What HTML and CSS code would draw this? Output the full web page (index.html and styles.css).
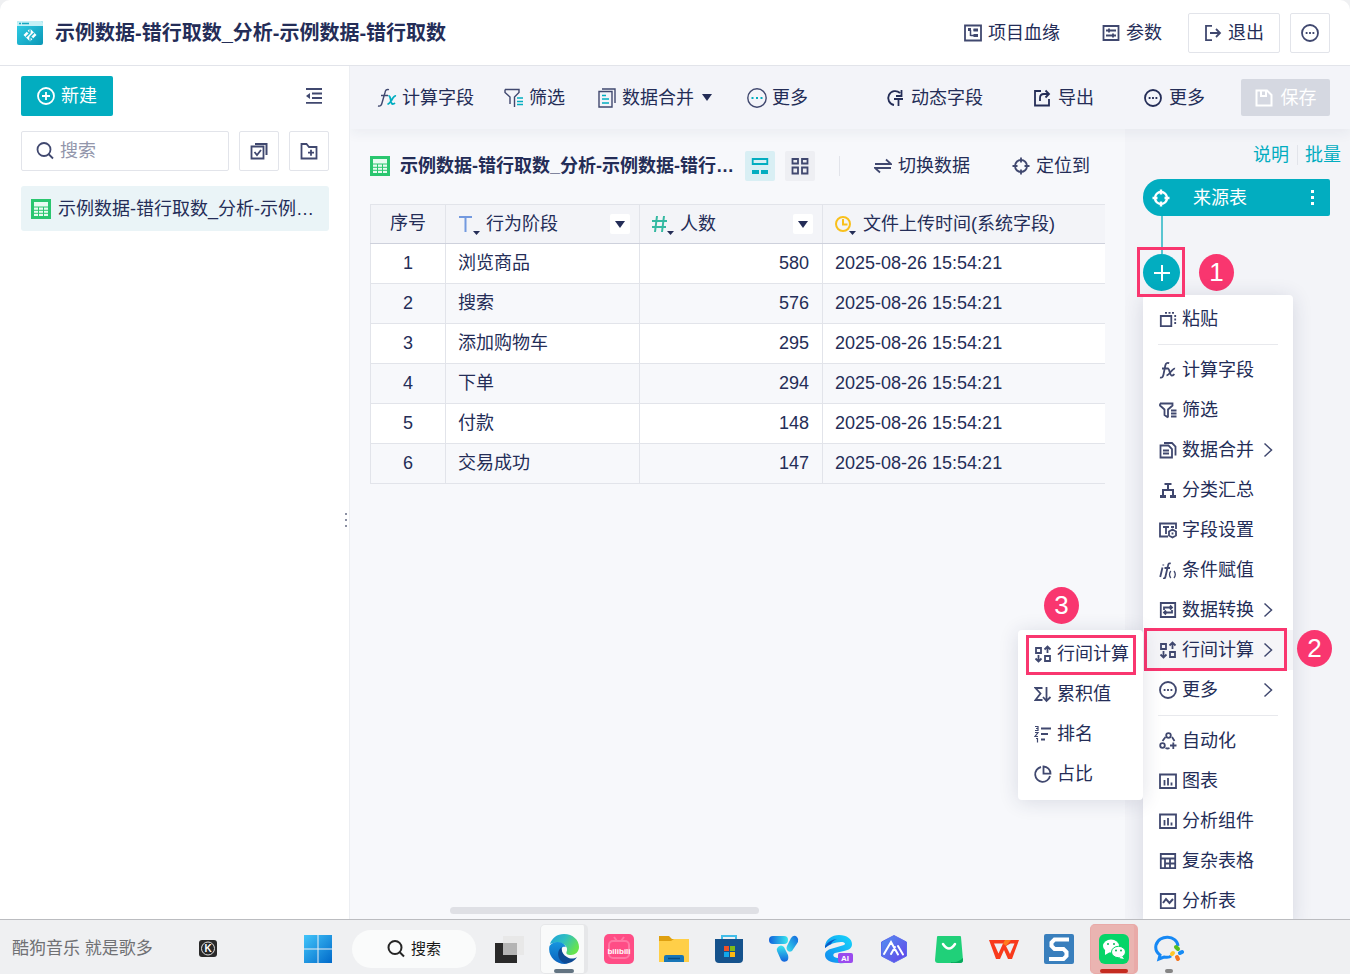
FILE: index.html
```
<!DOCTYPE html>
<html lang="zh-CN">
<head>
    <meta charset="UTF-8">
    <meta name="viewport" content="width=device-width, initial-scale=1.0">
    <title>示例数据-错行取数_分析</title>
    <link rel="stylesheet" href="styles.css">
</head>
<body>
    <!-- Shared icons -->
    <svg class="sprite" aria-hidden="true">
        <symbol id="i-more" viewBox="0 0 18 18"><circle cx="9" cy="9" r="8"/><path d="M4.7 9h1.8M8.1 9h1.8M11.5 9h1.8" stroke-width="1.8"/></symbol>
        <symbol id="i-sheet" viewBox="0 0 20 20"><path d="M0 0h20v20H0z" fill="#2ac66f" stroke="none"/><path d="M3 3h14v14H3z" fill="#e9fbf1" stroke="none"/><path d="M3 8h14M3 11.300h14M3 14.300h14M7.500 8v9M12.500 8v9" stroke="#2ac66f" stroke-width="1"/></symbol>
        <symbol id="i-target" viewBox="0 0 18 18"><circle cx="9" cy="9" r="6"/><path d="M9 .5v5M9 12.500v5M.5 9h5M12.500 9h5"/></symbol>
        <symbol id="i-fx" viewBox="0 0 18 18"><path d="M1 16.500c2.200.6 3-.6 3.500-3L6.300 4.500C6.800 2.200 8 1.500 10.200 2.200M3 7.500h6.500M8.500 7.500c2-.6 2.300 7 4 7s2-.6 2.800-1.500M16 7.600c-2.500-1-5.500 6.800-8.500 6.800"/></symbol>
        <symbol id="i-filter" viewBox="0 0 18 18"><path d="M1 2.500h12.500v2L9 8.500v8M1 2.500v2L5.500 8.500V14L9 16.500M12 9.500h5.500M12 12.500h5.500M12 15.500h5.500"/></symbol>
        <symbol id="i-merge" viewBox="0 0 18 18"><path d="M1.500 4.500h8L13 8v8.500H1.500zM4 9.500h6M4 12.500h6M5 2h8l3.500 3.500v9"/></symbol>
        <symbol id="i-caret" viewBox="0 0 10 7"><path d="M0 0h10L5 7z" fill="currentColor" stroke="none"/></symbol>
        <symbol id="i-arrow" viewBox="0 0 10 16"><path d="M1.500 1.500 8.500 8l-7 6.500"/></symbol>
        <symbol id="i-row" viewBox="0 0 18 18"><path d="M2 3h5v5H2zM11 11h5v5h-5zM13.500 8V1.500M10.500 4.500l3-3 3 3M4.500 10v6.500M1.500 13.500l3 3 3-3"/></symbol>
        <symbol id="i-chart" viewBox="0 0 18 18"><path d="M1 2.500h16v13.500H1zM5.500 8v5.500M9 6v7.500M12.500 10.500v3"/></symbol>
        <symbol id="i-search" viewBox="0 0 18 18"><circle cx="8" cy="7.500" r="6.500"/><path d="m12.500 12 4.500 4.500"/></symbol>
    </svg>

    <div class="app">
        <header class="header">
            <svg class="logo" viewBox="0 0 28 26">
                <defs><linearGradient id="logo-bg" x1="0" y1="0" x2="1" y2="1"><stop offset="0" stop-color="#31d0e8"/><stop offset="1" stop-color="#0a96b5"/></linearGradient></defs>
                <rect x="1" y="1" width="26" height="24" rx="2" fill="url(#logo-bg)"/>
                <path d="M1 6V3q0-2 2-2h22q2 0 2 2v3z" fill="#c5f1f7"/><path d="M3 3.500h2M6 3.500h7" stroke="#16a7c0" stroke-width="1.500"/>
                <path d="M14 8.500 20.500 15 14 21.500 7.500 15z" fill="#fff"/><path d="M14 8v5l-4 4M14 22v-5l4-4M11 11l3 3M17 19l-3-3" fill="none" stroke="#1eb3cc" stroke-width="1.300"/>
            </svg>
            <h1>示例数据-错行取数_分析-示例数据-错行取数</h1>
            <nav class="header-actions">
                <button class="tool"><svg class="icon" viewBox="0 0 18 18"><path d="M1 1.500h16v15H1z"/><path d="M4 6h3M9.500 6H14M6.500 6v6M6.500 11.500H14" stroke-width="1.500"/><path d="M4 4h3v3H4zM9.500 4.500H14v3H9.500zM9.500 10H14v3H9.500z" fill="currentColor" stroke="none"/></svg>项目血缘</button>
                <button class="tool"><svg class="icon" viewBox="0 0 18 18"><path d="M1.500 2h15v14h-15zM4 6.500h10M4 11.500h10M7 4.500v4M11 9.500v4"/></svg>参数</button>
                <div class="header-buttons">
                    <button class="outline exit"><svg class="icon" viewBox="0 0 18 18"><path d="M8 1.800H2v14.400h6M6 9h10M12 5l4 4-4 4"/></svg>退出</button>
                    <button class="outline square" aria-label="更多"><svg class="icon"><use href="#i-more"/></svg></button>
                </div>
            </nav>
        </header>

        <div class="body">
            <aside class="sidebar">
                <div class="sidebar-top">
                    <button class="primary"><svg class="icon" viewBox="0 0 18 18"><circle cx="9" cy="9" r="8"/><path d="M9 5v8M5 9h8"/></svg>新建</button>
                    <button class="plain" aria-label="收起"><svg class="icon" viewBox="0 0 18 18"><path d="M1 2h16M7 6.500h10M7 11h10M1 15.800h16"/><path d="M1 9l4-3v6z" fill="currentColor" stroke="none"/></svg></button>
                </div>
                <div class="sidebar-search">
                    <label class="search-box"><svg class="icon"><use href="#i-search"/></svg><input type="text" placeholder="搜索" aria-label="搜索"></label>
                    <button class="outline square" aria-label="批量选择"><svg class="icon" viewBox="0 0 18 18"><path d="M1.500 4.500h12v12h-12zM4.500 10l2.500 3 4-5"/><path d="M5 2h11.500v11" stroke-width="2"/></svg></button>
                    <button class="outline square" aria-label="新建文件夹"><svg class="icon" viewBox="0 0 18 18"><path d="M1.500 2h5l2.500 3h7.500v11.500h-15zM8 10.700h6M11 7.700v6"/></svg></button>
                </div>
                <a class="table-item" href="#"><svg class="sheet"><use href="#i-sheet"/></svg><span>示例数据-错行取数_分析-示例…</span></a>
                <div class="resize-handle"><i></i><i></i><i></i></div>
            </aside>

            <main class="workspace">
                <div class="toolbar">
                    <div class="toolbar-left">
                        <button class="tool"><svg class="icon large" viewBox="0 0 20 20"><path d="M1 18c2.500.6 3.500-.8 4-3L8 4.500C8.500 2 9.500 1 12 1.700M4 7.500h7"/><path class="accent" d="M11.500 8c2.500-.6 2 8 4 8s2-.5 2.500-1M19 8c-3-1-5 8-8.500 8" stroke-width="1.800"/></svg>计算字段</button>
                        <button class="tool"><svg class="icon large" viewBox="0 0 20 20"><path d="M1 1.500h14v3L10.500 9v10M1 1.500v3L6 9v7"/><path class="accent" d="M13 10h6M13 13.500h6M13 16.500h6"/></svg>筛选</button>
                        <button class="tool has-caret"><svg class="icon large" viewBox="0 0 20 20"><path d="M2 3.500h13v15.500H2zM5 1h13v14"/><path class="accent" d="M5 7.500h4M5 11h7M5 15h7"/></svg>数据合并<svg class="caret"><use href="#i-caret"/></svg></button>
                        <button class="tool"><svg class="icon large" viewBox="0 0 20 20"><circle cx="10" cy="10" r="9.200"/><path class="accent" d="M4.500 10h2M9 10h2M13.500 10h2" stroke-width="2"/></svg>更多</button>
                    </div>
                    <div class="toolbar-right">
                        <button class="tool"><svg class="icon" viewBox="0 0 18 18"><path d="M14 4A7 7 0 1 0 8 16M15.500 1v6H10M8 10h9M12.500 10v7"/></svg>动态字段</button>
                        <button class="tool"><svg class="icon" viewBox="0 0 18 18"><path d="M8 2H2v14.500h14V10M7 12V9q0-4 4-4h5M12.500 1.500 16 5l-3.500 3.500"/></svg>导出</button>
                        <button class="tool"><svg class="icon"><use href="#i-more"/></svg>更多</button>
                        <button class="save" disabled><svg class="icon" viewBox="0 0 18 18"><path d="M1.500 1.500H12l4.500 4.500v10.500h-15zM6 2v5h5V2" stroke-width="2"/></svg>保存</button>
                    </div>
                </div>

                <div class="panels">
                    <section class="data-panel">
                        <div class="data-head">
                            <svg class="sheet"><use href="#i-sheet"/></svg>
                            <h2>示例数据-错行取数_分析-示例数据-错行…</h2>
                            <button class="view active" aria-label="表格视图"><svg class="icon" viewBox="0 0 18 18"><path d="M1.700 2h14.600v5H1.700z"/><path d="M1 13h7v4H1zM10 13h7v4h-7z" fill="currentColor" stroke="none"/></svg></button>
                            <button class="view" aria-label="网格视图"><svg class="icon" viewBox="0 0 18 18"><path d="M1.500 2h5.500v4.500H1.500zM11 2h5.500v4.500H11zM1.500 10.500h5.500v6H1.500zM11 10.500h5.500v6H11z"/></svg></button>
                            <div class="data-actions">
                                <button class="tool"><svg class="icon" viewBox="0 0 18 18"><path d="M1 7h16l-5-4.500M17 11H1l5 4.500"/></svg>切换数据</button>
                                <button class="tool"><svg class="icon"><use href="#i-target"/></svg>定位到</button>
                            </div>
                        </div>

                        <table class="data-table">
                            <colgroup><col class="c-index"><col class="c-stage"><col class="c-count"><col></colgroup>
                            <thead>
                                <tr>
                                    <th>序号</th>
                                    <th><div class="th"><svg class="type text" viewBox="0 0 24 22"><path d="M1 4h13M7.500 4v15" stroke-width="2"/><path class="mark" d="M15 18h7l-3.500 4z"/></svg>行为阶段<button aria-label="行为阶段菜单"><svg class="caret"><use href="#i-caret"/></svg></button></div></th>
                                    <th><div class="th"><svg class="type number" viewBox="0 0 24 22"><path d="M0 8h15M0 14h14M5 3 3 19M12 3l-2 16" stroke-width="2"/><path class="mark" d="M15 18h7l-3.500 4z"/></svg>人数<button aria-label="人数菜单"><svg class="caret"><use href="#i-caret"/></svg></button></div></th>
                                    <th><div class="th"><svg class="type time" viewBox="0 0 24 22"><circle cx="8" cy="11" r="7" stroke-width="2"/><path d="M8 6v5.500h4.500" stroke-width="2"/><path class="mark" d="M14 18h7l-3.500 4z"/></svg>文件上传时间(系统字段)</div></th>
                                </tr>
                            </thead>
                            <tbody>
                                <tr><td>1</td><td>浏览商品</td><td>580</td><td>2025-08-26 15:54:21</td></tr>
                                <tr><td>2</td><td>搜索</td><td>576</td><td>2025-08-26 15:54:21</td></tr>
                                <tr><td>3</td><td>添加购物车</td><td>295</td><td>2025-08-26 15:54:21</td></tr>
                                <tr><td>4</td><td>下单</td><td>294</td><td>2025-08-26 15:54:21</td></tr>
                                <tr><td>5</td><td>付款</td><td>148</td><td>2025-08-26 15:54:21</td></tr>
                                <tr><td>6</td><td>交易成功</td><td>147</td><td>2025-08-26 15:54:21</td></tr>
                            </tbody>
                        </table>
                        <div class="scrollbar"></div>
                    </section>

                    <aside class="steps-panel">
                        <div class="step-links"><a href="#">说明</a><a href="#">批量</a></div>
                        <div class="source-node"><svg class="icon"><use href="#i-target"/></svg><span>来源表</span><button aria-label="来源表菜单"><i></i><i></i><i></i></button></div>
                        <div class="connector"></div>
                        <div class="add-step">
                            <button class="add-button" aria-label="添加步骤"><svg viewBox="0 0 18 18"><path d="M9 1v16M1 9h16"/></svg></button>
                            <div class="highlight mark-add"></div>
                            <span class="badge badge-1">1</span>

                            <ul class="menu main-menu">
                                <li><button><svg class="icon" viewBox="0 0 18 18"><path d="M1.800 6h10.500v10.200H1.800z"/><path d="M6 2.800h9M16.200 5v10" stroke-dasharray="2 1.500"/></svg>粘贴</button></li>
                                <li class="separator"></li>
                                <li><button><svg class="icon"><use href="#i-fx"/></svg>计算字段</button></li>
                                <li><button><svg class="icon"><use href="#i-filter"/></svg>筛选</button></li>
                                <li><button><svg class="icon"><use href="#i-merge"/></svg>数据合并<svg class="arrow"><use href="#i-arrow"/></svg></button></li>
                                <li><button><svg class="icon" viewBox="0 0 18 18"><path d="M5.500 3h7M9 3v6M4 14V9h10v5" stroke-width="2"/><path d="M1 15.500h6M11 15.500h6" stroke-width="3"/></svg>分类汇总</button></li>
                                <li><button><svg class="icon" viewBox="0 0 18 18"><path d="M9 15.500H1v-13h16V8M4 6h6M7 6v7M12 6h3"/><path d="m13.500 8.500 3.500 2v4l-3.500 2-3.500-2v-4z"/><path d="M13.500 11.500v2"/></svg>字段设置</button></li>
                                <li><button><svg class="icon" viewBox="0 0 18 18"><path d="M3.500 6.500 1.200 16M4.300 3.500v1M4 17.500c1.700.3 2.200-.6 2.500-2L9 4.500c.4-2 1.300-2.500 2.800-2M5.500 7H11"/><path d="M11.800 10q-2.600 3.500 0 7M15 10q2.600 3.500 0 7" stroke-width="1.300"/></svg>条件赋值</button></li>
                                <li><button><svg class="icon" viewBox="0 0 18 18"><path d="M1.800 2h14.400v14H1.800zM5 9V6.500h7M11 4.500l2 2-2 2M13 9v2.500H6M7 9.500l-2 2 2 2"/></svg>数据转换<svg class="arrow"><use href="#i-arrow"/></svg></button></li>
                                <li class="current">
                                    <button><svg class="icon"><use href="#i-row"/></svg>行间计算<svg class="arrow"><use href="#i-arrow"/></svg></button>
                                    <div class="highlight mark-menu"></div>
                                    <span class="badge badge-2">2</span>
                                    <ul class="menu sub-menu">
                                        <li><button><svg class="icon"><use href="#i-row"/></svg>行间计算</button><div class="highlight mark-sub"></div><span class="badge badge-3">3</span></li>
                                        <li><button><svg class="icon" viewBox="0 0 18 18"><path d="M8.500 3h-7l5 5.500-5 6.500h7M12.500 2v14M9 12l3.500 4 4-4"/></svg>累积值</button></li>
                                        <li><button><svg class="icon" viewBox="0 0 18 18"><path d="M7 3.500h10M7 9h7M7 14.500h4"/><path d="M1 1.500h3v4H1M2 3.500h2M1 7.500h3l-3 4h3M2 13.500h1.500v4" stroke-width="1.200"/></svg>排名</button></li>
                                        <li><button><svg class="icon" viewBox="0 0 18 18"><path d="M7 2a7.500 7.500 0 1 0 9 9M9.500 1.500v7.200h7A7.200 7.200 0 0 0 9.500 1.500z"/></svg>占比</button></li>
                                    </ul>
                                </li>
                                <li><button><svg class="icon"><use href="#i-more"/></svg>更多<svg class="arrow"><use href="#i-arrow"/></svg></button></li>
                                <li class="separator"></li>
                                <li><button><svg class="icon" viewBox="0 0 18 18"><circle cx="9.500" cy="3.500" r="2.300"/><circle cx="3.500" cy="13.500" r="2.300"/><path d="M6.500 5 3.500 9M13 5l2.500 4M6.500 16q2 1 4 0M11 13.500h6.500M14.300 10.500v6.500"/></svg>自动化</button></li>
                                <li><button><svg class="icon"><use href="#i-chart"/></svg>图表</button></li>
                                <li><button><svg class="icon"><use href="#i-chart"/></svg>分析组件</button></li>
                                <li><button><svg class="icon" viewBox="0 0 18 18"><path d="M1.800 2h14.400v14.200H1.800zM2 6.500h14M6 6.500V16M6 11.500h10M11 6.500V16"/></svg>复杂表格</button></li>
                                <li><button><svg class="icon" viewBox="0 0 18 18"><path d="M1.800 2h14.400v14.200H1.800z"/><path d="m4 11 3-4 3.500 4L14 7" stroke-width="2"/></svg>分析表</button></li>
                            </ul>
                        </div>
                    </aside>
                </div>
            </main>
        </div>
    </div>

    <footer class="taskbar">
        <div class="music"><span>酷狗音乐 就是歌多</span><svg viewBox="0 0 18 18"><rect width="18" height="17" rx="3" fill="#292929"/><circle cx="9" cy="8.500" r="6.500" fill="none" stroke="#ddd"/><text x="9" y="12" font-size="10" font-weight="700" text-anchor="middle" fill="#fff">K</text></svg></div>
        <button class="start" aria-label="开始"><svg viewBox="0 0 30 30"><defs><linearGradient id="win" x1="0" y1="0" x2="1" y2="1"><stop offset="0" stop-color="#42c5fa"/><stop offset="1" stop-color="#0069c9"/></linearGradient></defs><path d="M1 1h13.500v13.500H1zM15.500 1H29v13.500H15.500zM1 15.500h13.500V29H1zM15.500 15.500H29V29H15.500z" fill="url(#win)"/></svg></button>
        <button class="task-search"><svg class="icon"><use href="#i-search"/></svg>搜索</button>
        <div class="tasks">
            <button aria-label="任务视图"><svg viewBox="0 0 30 30"><path d="M1 9h22v20H1z" fill="#292929"/><path d="M9 2h21v19H9z" fill="#e8e8e8"/><path d="M9 9h14v12H9z" fill="#b4b4b4"/></svg></button>
            <button class="open" aria-label="Edge"><svg viewBox="0 0 30 30">
                <defs>
                    <linearGradient id="edge-a" x1="0" y1="0" x2="1" y2=".5"><stop offset="0" stop-color="#1b9fdc"/><stop offset=".5" stop-color="#30bfc0"/><stop offset="1" stop-color="#66e34f"/></linearGradient>
                    <linearGradient id="edge-b" x1="0" y1="0" x2="0" y2="1"><stop offset="0" stop-color="#1795df"/><stop offset="1" stop-color="#0b62bd"/></linearGradient>
                </defs>
                <path d="M1 10C3 4 8 0 15 0c9 0 15 6 15 13 0 5-4 8-8 8-4 0-5-1-4.500-3 2-4-1-8-6-9-4-.7-8 0-10.500 1z" fill="url(#edge-a)"/>
                <path d="M.5 12C3 8 9 7 13 9c3 1.500 4 4 4 4-4-1-6 2-6 6 0 5 3 9 8 10.500C9 32-2 23 .5 12z" fill="url(#edge-b)"/>
                <path d="M13 13c-5 3-5 10-1 14 5 5 13 1 16-4-3 2-7 2-10 0-4-2-6-6-5-10z" fill="#0d4a94"/>
            </svg></button>
            <button aria-label="bilibili"><svg viewBox="0 0 30 30"><rect width="30" height="30" rx="5" fill="#ff4d86"/><path d="m10 3 3 4M20 3l-3 4" stroke="#ff78a4" stroke-width="2"/><rect x="5" y="7" width="20" height="17" rx="4" fill="none" stroke="#ff78a4" stroke-width="2"/><text x="15" y="20" font-size="8" font-weight="700" text-anchor="middle" fill="#fff">bilibili</text></svg></button>
            <button aria-label="文件资源管理器"><svg viewBox="0 0 30 30"><path d="M0 2h10l3 3h17v10H0z" fill="#dfa010"/><path d="M0 7h12l3-2h15v23H0z" fill="#ffcf48"/><path d="M5 28v-5q0-2 2-2h16q2 0 2 2v5z" fill="#1776b8"/><path d="M9 24.500h12" stroke="#064b82" stroke-width="1.500"/></svg></button>
            <button aria-label="应用商店"><svg viewBox="0 0 30 30"><path d="M8 7V2h14v5" fill="none" stroke="#42bde9" stroke-width="2"/><path d="M1 5h28v20q0 4-4 4H5q-4 0-4-4z" fill="#15528c"/><path d="M10 12h5v5h-5z" fill="#f05127"/><path d="M16 12h5v5h-5z" fill="#80bb17"/><path d="M10 18h5v5h-5z" fill="#12a7ea"/><path d="M16 18h5v5h-5z" fill="#fdb913"/></svg></button>
            <button aria-label="视图"><svg viewBox="0 0 30 30">
                <defs>
                    <linearGradient id="v-a"><stop offset="0" stop-color="#1262dc"/><stop offset="1" stop-color="#38e6ee"/></linearGradient>
                    <linearGradient id="v-b" x1="1" y1="0" x2="0" y2="1"><stop offset="0" stop-color="#1262dc"/><stop offset="1" stop-color="#38e6ee"/></linearGradient>
                    <linearGradient id="v-c" x1="0" y1="0" x2="0" y2="1"><stop offset="0" stop-color="#38e6ee"/><stop offset="1" stop-color="#1262dc"/></linearGradient>
                </defs>
                <rect x="0" y="2" width="19" height="8" rx="4" fill="url(#v-a)"/>
                <path d="M22 4q3-4 6-1 2 2 1 5l-6 9q-3 2-5-1-1-2 0-4z" fill="url(#v-b)"/>
                <path d="M9 13q3-3 6 0l4 8q1 4-1 6-4 2-6-1l-4-9q-1-2 1-4z" fill="url(#v-c)"/>
            </svg></button>
            <button aria-label="AI 浏览器"><svg viewBox="0 0 30 30"><defs><linearGradient id="e-ai" x1="0" y1="1" x2="1" y2="0"><stop offset="0" stop-color="#1289ee"/><stop offset="1" stop-color="#16d6fb"/></linearGradient></defs><path d="M1 12C2 5 8 1 15 1c8 0 13 4 13 9 0 4-3 6-8 7l-9 2c-3 1-2 5 3 5h14c-3 4-8 6-13 5C5 29 1 25 1 21c0-4 4-6 9-7l10-3c2-1 1-3-3-3-6 0-11 2-16 6z" fill="url(#e-ai)"/><path d="M1 12q4-6 12-7-5 2-6 5-3 1-6 4z" fill="#0a5ac5"/><rect x="14" y="19" width="15" height="10" rx="2" fill="#9a4bee"/><text x="21" y="27" font-size="8" font-weight="700" text-anchor="middle" fill="#fff">AI</text></svg></button>
            <button aria-label="AI 助手"><svg viewBox="0 0 30 30"><defs><linearGradient id="hex" x1="0" y1="0" x2="1" y2="1"><stop offset="0" stop-color="#5293f0"/><stop offset="1" stop-color="#6540e8"/></linearGradient></defs><path d="M15 1.500 27.500 8v14L15 28.500 2.500 22V8z" fill="url(#hex)" stroke="#5969ed" stroke-linejoin="round"/><path d="M5 20 12 8l7 12.500M12 20l4-7M19 12l5 8.500" fill="none" stroke="#fff" stroke-width="2" stroke-linecap="round"/></svg></button>
            <button aria-label="商城"><svg viewBox="0 0 30 30"><path d="M4 2h22q1 0 1 1l2 23q0 3-3 3H4q-3 0-3-3L3 3q0-1 1-1z" fill="#20d079"/><path d="M17 28q7 1 12-4v2q0 3-3 3h-9z" fill="#07a85b"/><path d="M9 10q6 9 12 0" fill="none" stroke="#fff" stroke-width="2.500" stroke-linecap="round"/></svg></button>
            <button aria-label="WPS"><svg viewBox="0 0 30 30"><path fill-rule="evenodd" d="M0 6h30l-7 19h-4l-4-9-4 9H7zM5 9.500l4.500 10L14 9.500zM17 12l4 8 4.500-10.500h-4z" fill="#f83a1c"/><path d="m14 9.500 2-3.500h6l-5 6z" fill="#ff7b1d"/></svg></button>
            <button aria-label="截图"><svg viewBox="0 0 30 30"><rect width="30" height="30" rx="2" fill="#397fbd"/><path d="M25 5.500H10.500L7.500 8.500V12l3 3h9l3 3v4L19.500 25H5" fill="none" stroke="#fff" stroke-width="4"/></svg></button>
            <button class="open alert" aria-label="微信"><svg viewBox="0 0 30 30"><rect width="30" height="30" rx="6" fill="#06d568"/><ellipse cx="12" cy="12" rx="8" ry="6.500" fill="#fff"/><path d="m6 16 0 5 5-3z" fill="#fff"/><ellipse cx="19.500" cy="18" rx="7" ry="5.700" fill="#fff" stroke="#06d568"/><path d="m23 22 2 3-5-1z" fill="#fff"/><g fill="#06b85b"><circle cx="9" cy="10" r="1"/><circle cx="15" cy="10" r="1"/><circle cx="17" cy="16.500" r="1"/><circle cx="22" cy="16.500" r="1"/></g></svg></button>
            <button class="running" aria-label="企业微信"><svg viewBox="0 0 30 30"><path d="M24 12C23 1 5 0 2 11c-1 5 1 8 4 10l-1 4 5-2q5 1 7-1" fill="none" stroke="#1688f4" stroke-width="3"/><g stroke-width="4" stroke-linecap="round"><path d="m22 13 2 2" stroke="#55be20"/><path d="m28 18-2 1" stroke="#168bf5"/><path d="m24 25-1-2" stroke="#f47622"/><path d="m18 20 1-1" stroke="#ffc729"/></g></svg></button>
        </div>
    </footer>
</body>
</html>
```
FILE: styles.css
```
* {
    margin: 0;
    padding: 0;
    box-sizing: border-box;
}

:root {
    --ink: #242d57;
    --icon: #40486f;
    --teal: #02adc0;
    --line: #e2e4ea;
    --pink: #f9366f;
}

body {
    height: 100vh;
    display: flex;
    flex-direction: column;
    overflow: hidden;
    background: #eff0f2;
    color: var(--ink);
    font-family: 'Liberation Sans', 'Noto Sans CJK SC', sans-serif;
    font-size: 18px;
    line-height: 26px;
}

button,
input {
    border: 0;
    background: none;
    color: inherit;
    font: inherit;
}

a {
    color: inherit;
    text-decoration: none;
}

ul {
    list-style: none;
}

.sprite {
    position: absolute;
    width: 0;
    height: 0;
}

.icon {
    width: 18px;
    height: 18px;
    flex: none;
    fill: none;
    stroke: currentColor;
    stroke-width: 1.8;
    color: var(--icon);
}

.icon.large {
    width: 20px;
    height: 20px;
    stroke-width: 1.4;
}

.accent {
    stroke: var(--teal);
}

.sheet {
    width: 20px;
    height: 20px;
    flex: none;
}

.caret {
    width: 10px;
    height: 7px;
    flex: none;
}

.tool {
    display: flex;
    align-items: center;
    gap: 6px;
    white-space: nowrap;
}

.outline {
    display: flex;
    align-items: center;
    justify-content: center;
    gap: 6px;
    height: 40px;
    border: 1px solid var(--line);
    border-radius: 2px;
    background: #fff;
}

.square {
    width: 40px;
    flex: none;
}

/* Header */
.app {
    flex: 1;
    min-height: 0;
    display: flex;
    flex-direction: column;
}

.header {
    height: 66px;
    flex: none;
    display: flex;
    align-items: center;
    padding: 0 20px 0 16px;
    border-bottom: 1px solid var(--line);
    border-radius: 10px 10px 0 0;
    background: #fff;
}

.logo {
    width: 28px;
    height: 26px;
    margin-right: 11px;
}

h1 {
    font-size: 20px;
    font-weight: 700;
    white-space: nowrap;
}

.header-actions {
    display: flex;
    align-items: center;
    gap: 42px;
    margin-left: auto;
}

.header-buttons {
    display: flex;
    gap: 10px;
    margin-left: -16px;
}

.exit {
    width: 92px;
}

.body {
    flex: 1;
    min-height: 0;
    display: flex;
}

/* Sidebar */
.sidebar {
    position: relative;
    width: 350px;
    flex: none;
    padding: 10px 20px 10px 21px;
    border-right: 1px solid #eceef2;
    background: #fff;
}

.sidebar-top {
    display: flex;
    align-items: center;
    justify-content: space-between;
    padding-right: 6px;
}

.primary {
    display: flex;
    align-items: center;
    justify-content: center;
    gap: 6px;
    width: 92px;
    height: 40px;
    border-radius: 2px;
    background: var(--teal);
    color: #fff;
}

.primary .icon,
.save .icon,
.source-node .icon {
    color: #fff;
}

.plain {
    display: flex;
}

.sidebar-search {
    display: flex;
    gap: 10px;
    margin: 15px 0;
}

.search-box {
    flex: 1;
    min-width: 0;
    height: 40px;
    display: flex;
    align-items: center;
    gap: 6px;
    padding: 0 14px;
    border: 1px solid var(--line);
    border-radius: 2px;
}

.search-box input {
    width: 100%;
    min-width: 0;
    outline: none;
}

.search-box input::placeholder {
    color: #9296ab;
}

.table-item {
    height: 45px;
    display: flex;
    align-items: center;
    gap: 7px;
    padding: 0 10px;
    border-radius: 3px;
    background: #eaf4f7;
    white-space: nowrap;
}

.resize-handle {
    position: absolute;
    top: 50%;
    right: 2px;
    display: grid;
    gap: 4px;
    margin-top: 20px;
}

.resize-handle i {
    width: 2px;
    height: 2px;
    background: #8b90a3;
}

/* Workspace */
.workspace {
    flex: 1;
    min-width: 0;
    display: flex;
    flex-direction: column;
}

.toolbar {
    height: 63px;
    flex: none;
    display: flex;
    align-items: center;
    justify-content: space-between;
    padding: 0 20px 0 27px;
    background: #f3f4f9;
    box-shadow: 0 4px 12px rgba(36, 45, 87, 0.06);
    clip-path: inset(0 0 -20px 0);
    z-index: 1;
}

.toolbar-left,
.toolbar-right {
    display: flex;
    align-items: center;
    gap: 30px;
}

.toolbar-right {
    gap: 50px;
}

.toolbar-left .tool {
    gap: 5px;
}

.toolbar-right .tool {
    gap: 7px;
}

.toolbar-right .icon {
    color: var(--ink);
}

.has-caret {
    padding: 0 5px 0 2px;
}

.has-caret .caret {
    margin-left: 3px;
}

.save {
    display: flex;
    align-items: center;
    justify-content: center;
    gap: 8px;
    width: 89px;
    height: 37px;
    margin-left: -14px;
    border-radius: 2px;
    background: #d5d8e1;
    color: #fff;
}

.toolbar-right .save .icon {
    color: #fff;
}

.panels {
    flex: 1;
    min-height: 0;
    display: flex;
}

.data-panel {
    flex: 1;
    min-width: 0;
    display: flex;
    flex-direction: column;
    padding: 22px 20px 5px;
    background: #f7f8fb;
}

.data-head {
    display: flex;
    align-items: center;
    gap: 10px;
    margin-bottom: 23px;
}

h2 {
    width: 335px;
    font-size: 18px;
    font-weight: 700;
    white-space: nowrap;
}

.view {
    width: 30px;
    height: 30px;
    flex: none;
    display: flex;
    align-items: center;
    justify-content: center;
    border-radius: 2px;
    background: #eeeff3;
}

.view.active {
    background: #d9eff4;
}

.view.active .icon {
    color: var(--teal);
}

.data-actions {
    display: flex;
    gap: 42px;
    margin: 0 15px 0 auto;
    padding-left: 35px;
    background: linear-gradient(var(--line), var(--line)) left / 1px 20px no-repeat;
}

.data-table {
    width: 100%;
    table-layout: fixed;
    border-collapse: collapse;
    border: 1px solid var(--line);
    border-right: 0;
}

.c-index {
    width: 75px;
}

.c-stage {
    width: 194px;
}

.c-count {
    width: 183px;
}

.data-table th,
.data-table td {
    height: 40px;
    padding: 0 12px;
    border-right: 1px solid var(--line);
    border-bottom: 1px solid var(--line);
    text-align: left;
    font-weight: 400;
}

.data-table th {
    height: 39px;
    border-bottom-color: #ced1dc;
    background: #f3f4f8;
}

.data-table td {
    padding-bottom: 2px;
    background: #fff;
}

.data-table tr:nth-child(even) td {
    background: #f7f8fb;
}

.data-table th:first-child,
.data-table td:first-child {
    padding-bottom: 2px;
    text-align: center;
}

.data-table td:nth-child(3) {
    padding-right: 13px;
    text-align: right;
}

.data-table th:last-child,
.data-table td:last-child {
    border-right: 0;
}

.th {
    display: flex;
    align-items: center;
    gap: 4px;
    white-space: nowrap;
}

.th button {
    width: 20px;
    height: 20px;
    display: flex;
    align-items: center;
    justify-content: center;
    margin: 0 -3px 0 auto;
    border-radius: 2px;
    background: #fff;
}

.type {
    width: 24px;
    height: 22px;
    flex: none;
    fill: none;
    stroke: currentColor;
}

.type.text {
    color: #7399df;
}

.type.number {
    color: #35b9a2;
}

.type.time {
    color: #f9c01c;
}

.mark {
    fill: var(--ink);
    stroke: none;
}

.scrollbar {
    width: 309px;
    height: 7px;
    margin: auto 0 0 80px;
    border-radius: 4px;
    background: #dfe0e5;
}

/* Step flow */
.steps-panel {
    width: 225px;
    flex: none;
    padding: 13px 20px 0 18px;
    background: #f3f4f8;
}

.step-links {
    display: flex;
    justify-content: flex-end;
    margin: 0 -11px 11px 0;
    color: var(--teal);
}

.step-links a + a {
    margin-left: 8px;
    padding-left: 8px;
    background: linear-gradient(var(--line), var(--line)) left / 1px 20px no-repeat;
}

.source-node {
    height: 37px;
    display: flex;
    align-items: center;
    padding: 0 16px 0 9px;
    border-radius: 18px 2px 2px 18px;
    background: var(--teal);
    color: #fff;
}

.source-node .icon {
    stroke-width: 2.4;
}

.source-node span {
    margin: 0 auto 0 23px;
}

.source-node button {
    display: grid;
    gap: 3px;
}

.source-node i {
    width: 3px;
    height: 3px;
    background: #fff;
}

.connector {
    width: 2px;
    height: 38px;
    margin-left: 18px;
    background: #59c5d1;
}

.add-step {
    position: relative;
    width: 37px;
}

.add-button {
    width: 37px;
    height: 37px;
    display: flex;
    align-items: center;
    justify-content: center;
    border-radius: 50%;
    background: var(--teal);
}

.add-button svg {
    width: 18px;
    height: 18px;
    stroke: #fff;
    stroke-width: 2;
}

/* Menus open over the panels */
.menu {
    position: absolute;
    padding: 4px 0;
    border-radius: 4px;
    background: #fff;
    box-shadow: 0 2px 20px rgba(36, 45, 87, 0.14);
}

.main-menu {
    top: 41px;
    left: 0;
    width: 150px;
}

.sub-menu {
    top: 0;
    right: 150px;
    width: 125px;
    padding-bottom: 6px;
}

.menu li {
    position: relative;
}

.menu button {
    width: 100%;
    height: 40px;
    display: flex;
    align-items: center;
    gap: 5px;
    padding: 0 20px 0 16px;
    white-space: nowrap;
}

.menu .separator {
    height: 1px;
    margin: 5px 15px;
    background: #e8e9ed;
}

.current > button {
    background: #f5f5f8;
}

.arrow {
    width: 10px;
    height: 16px;
    margin-left: auto;
    fill: none;
    stroke: var(--icon);
    stroke-width: 1.5;
}

.highlight {
    position: absolute;
    border: 3px solid var(--pink);
    pointer-events: none;
}

.mark-add {
    inset: -7px -5px -6px -6px;
    z-index: 1;
}

.mark-menu {
    inset: -2px 6px -1px 1px;
}

.mark-sub {
    inset: 1px 7px -1px 8px;
}

.badge {
    position: absolute;
    width: 35px;
    height: 37px;
    border-radius: 50%;
    background: var(--pink);
    color: #fff;
    font-size: 26px;
    line-height: 37px;
    text-align: center;
}

.badge-1 {
    top: 0;
    left: 56px;
}

.badge-2 {
    top: 0;
    left: 154px;
}

.badge-3 {
    bottom: 50px;
    left: 26px;
}

/* Taskbar */
.taskbar {
    position: relative;
    z-index: 2;
    height: 55px;
    flex: none;
    display: flex;
    align-items: center;
    padding: 4px 0 0 12px;
    border-top: 1px solid #bbbcc0;
    background: #eff0f2;
}

.music {
    width: 205px;
    display: flex;
    align-items: center;
    justify-content: space-between;
    margin-right: 86px;
    color: #707174;
    font-size: 17px;
}

.music svg {
    width: 18px;
    height: 18px;
}

.start,
.start svg {
    display: block;
    width: 30px;
    height: 30px;
}

.task-search {
    width: 124px;
    height: 38px;
    display: flex;
    align-items: center;
    justify-content: center;
    gap: 6px;
    margin: 0 5px 0 19px;
    border-radius: 19px;
    background: #fafbfb;
    color: #191919;
    font-size: 15px;
}

.task-search .icon {
    color: #252525;
    stroke-width: 2;
}

.tasks {
    display: flex;
}

.tasks button {
    position: relative;
    width: 55px;
    height: 50px;
    display: flex;
    align-items: center;
    justify-content: center;
}

.tasks svg {
    position: relative;
    width: 30px;
    height: 30px;
}

.tasks .open::before {
    content: '';
    position: absolute;
    inset: 0 3px 0 4px;
    border: 1px solid #e6e7e9;
    border-right-width: 4px;
    border-radius: 5px;
    background: #f9fafa;
}

.tasks .open::after,
.tasks .running::after {
    content: '';
    position: absolute;
    bottom: 1px;
    width: 20px;
    height: 4px;
    border-radius: 2px;
    background: #637482;
}

.tasks .alert::before {
    border-color: #e9aaa8;
    background: #eab4b1;
}

.tasks .alert::after {
    width: 28px;
    background: #c52b20;
}

.tasks .running::after {
    width: 8px;
    background: #858585;
}
```
